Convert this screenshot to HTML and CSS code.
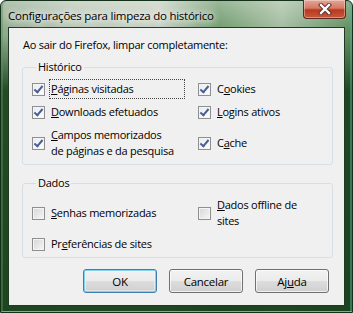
FILE: index.html
```html
<!DOCTYPE html>
<html lang="pt">
<head>
  <meta charset="UTF-8">
  <title>Configurações para limpeza do histórico</title>
  <link rel="stylesheet" href="styles.css">
</head>
<body>
  <div class="window">
    <div class="titlebar">
      <span class="title">Configurações para limpeza do histórico</span>
      <span class="close">
        <svg width="16" height="12" viewBox="0 0 16 12">
          <path d="M4 2 L12 10 M12 2 L4 10" stroke="#5a2a20" stroke-width="4.2" stroke-linecap="square"/>
          <path d="M4 2 L12 10 M12 2 L4 10" stroke="#fff" stroke-width="2.4" stroke-linecap="square"/>
        </svg>
      </span>
    </div>

    <div class="client">
      <p class="intro">Ao sair do Firefox, limpar completamente:</p>

      <fieldset class="group">
        <legend>Histórico</legend>
        <div class="options">
          <label class="opt"><span class="box checked"></span><span class="text focus"><u>P</u>áginas visitadas</span></label>
          <label class="opt"><span class="box checked"></span><span class="text">C<u>o</u>okies</span></label>
          <label class="opt"><span class="box checked"></span><span class="text"><u>D</u>ownloads efetuados</span></label>
          <label class="opt"><span class="box checked"></span><span class="text"><u>L</u>ogins ativos</span></label>
          <label class="opt"><span class="box checked"></span><span class="text"><u>C</u>ampos memorizados<br>de páginas e da pesquisa</span></label>
          <label class="opt"><span class="box checked"></span><span class="text">C<u>a</u>che</span></label>
        </div>
      </fieldset>

      <fieldset class="group data">
        <legend>Dados</legend>
        <div class="options">
          <label class="opt"><span class="box"></span><span class="text"><u>S</u>enhas memorizadas</span></label>
          <label class="opt"><span class="box"></span><span class="text"><u>D</u>ados offline de<br>sites</span></label>
          <label class="opt"><span class="box"></span><span class="text">Pr<u>e</u>ferências de sites</span></label>
        </div>
      </fieldset>

      <div class="buttons">
        <button class="btn default">OK</button>
        <button class="btn">Cancelar</button>
        <button class="btn">Aj<u>u</u>da</button>
      </div>
    </div>
  </div>
</body>
</html>
```

FILE: styles.css
```css
body {
  margin: 0;
  font-family: "Open Sans", "Noto Sans", sans-serif;
  font-size: 11px;
  letter-spacing: -0.25px;
  color: #000;
}
.window {
  width: 353px;
  height: 313px;
  box-sizing: border-box;
  padding: 0 7px 7px 7px;
  border: 1px solid #15301a;
  border-radius: 6px 6px 0 0;
  background:
    linear-gradient(180deg, rgba(255,255,255,0.3) 0, rgba(255,255,255,0) 30px, rgba(22,64,26,0) 34px, rgba(22,64,26,0.9) 90px, rgba(22,64,26,0.95) 100%),
    linear-gradient(90deg, #8fa98c 0, #b7c6b3 20%, #c6d0c2 45%, #6f9a6c 62%, #a3bda0 80%, #5d8c5b 100%);
  box-shadow: inset 2px 0 0 rgba(90,150,90,0.45), inset -2px 0 0 rgba(90,170,150,0.5), inset 0 -1px 0 #6fb0a8;
}
.titlebar {
  height: 26px;
  display: flex;
  align-items: flex-start;
  justify-content: space-between;
}
.title {
  margin-top: 7px;
  font-size: 11.5px;
  text-shadow: 0 0 6px #fff, 0 0 10px rgba(255,255,255,0.9), 0 0 14px rgba(255,255,255,0.7);
}
.close {
  width: 41px;
  height: 18px;
  margin-top: -1px;
  margin-right: -1px;
  display: flex;
  align-items: center;
  justify-content: center;
  border: 1px solid #5b2a22;
  border-top: none;
  border-radius: 0 0 4px 4px;
  background: linear-gradient(180deg, #e4a596 0, #d57a66 45%, #b9391f 55%, #c9583c 100%);
  box-shadow: inset 0 0 0 1px rgba(255,255,255,0.35);
}
.client {
  height: 279px;
  box-sizing: border-box;
  border: 1px solid #1f3a22;
  background: #f0f0f0;
  padding: 9px 11px 0 13px;
}
.intro {
  margin: 0 0 6px 1px;
  line-height: 16px;
}
.group {
  margin: 0;
  padding: 6px 9px 5px 9px;
  border: 1px solid #d5dfe5;
  border-radius: 3px;
}
.group legend {
  padding: 0 2px;
  margin-left: 4px;
  line-height: 16px;
}
.data {
  margin-top: 10px;
}
.options {
  display: grid;
  grid-template-columns: 166px 1fr;
  row-gap: 7px;
  align-items: center;
}
.opt {
  display: flex;
  align-items: center;
  line-height: 16px;
}
.text {
  margin-left: 6px;
}
.focus {
  outline: 1px dotted #444;
  outline-offset: 1px;
  width: 132px;
}
.box {
  position: relative;
  flex: none;
  width: 11px;
  height: 11px;
  border: 1px solid #8f8f8f;
  background: linear-gradient(135deg, #d6d6d6 0, #f7f7f7 100%);
  box-shadow: inset 0 0 0 1px #f4f4f4;
}
.box.checked {
  background: linear-gradient(135deg, #e6ebf2 0, #ffffff 100%);
}
.box.checked::after {
  content: "";
  position: absolute;
  left: 3px;
  top: 0px;
  width: 3px;
  height: 7px;
  border-right: 2px solid #4a5e92;
  border-bottom: 2px solid #4a5e92;
  transform: rotate(40deg);
}
.buttons {
  display: flex;
  justify-content: flex-end;
  gap: 12px;
  margin-top: 11px;
  padding-right: 4px;
}
.btn {
  width: 74px;
  height: 24px;
  font-family: inherit;
  font-size: 11.5px;
  letter-spacing: inherit;
  border: 1px solid #707070;
  border-radius: 3px;
  background: linear-gradient(180deg, #f2f2f2 0, #ebebeb 48%, #dddddd 52%, #cfcfcf 100%);
  box-shadow: inset 0 0 0 1px rgba(255,255,255,0.7);
  padding: 0;
}
.btn.default {
  border-color: #3c7fb1;
  box-shadow: inset 0 0 0 1px #7fd3f0, inset 0 0 0 2px rgba(255,255,255,0.4);
}
```
